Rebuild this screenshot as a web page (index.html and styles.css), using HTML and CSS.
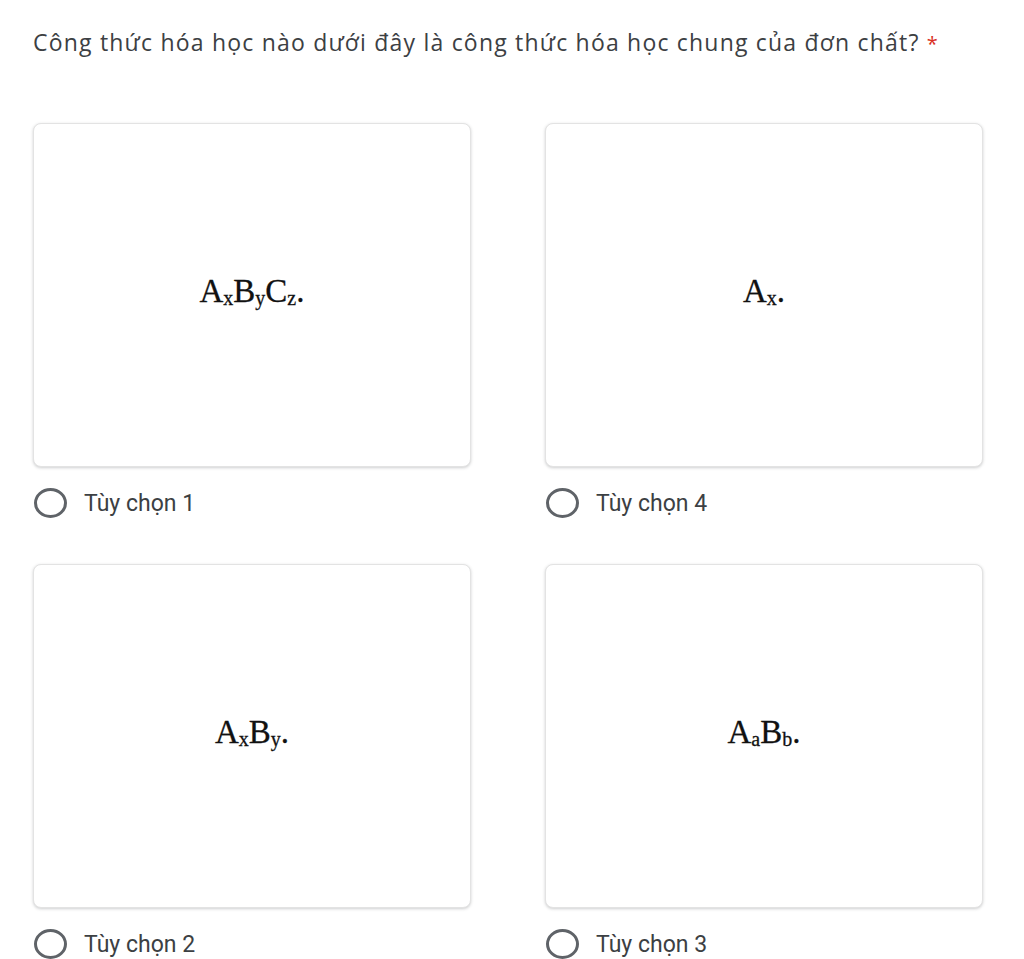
FILE: index.html
```html
<!DOCTYPE html>
<html lang="vi">
<head>
<meta charset="utf-8">
<link rel="stylesheet" href="styles.css">
</head>
<body>
<div class="page">
  <h1 class="title">Công thức hóa học nào dưới đây là công thức hóa học chung của đơn chất? <span class="req">*</span></h1>
  <div class="grid">
    <div class="option">
      <div class="card"><span class="formula">A<sub>x</sub>B<sub>y</sub>C<sub>z</sub>.</span></div>
      <div class="choice"><span class="radio"></span><span class="label">Tùy chọn 1</span></div>
    </div>
    <div class="option">
      <div class="card"><span class="formula">A<sub>x</sub>.</span></div>
      <div class="choice"><span class="radio"></span><span class="label">Tùy chọn 4</span></div>
    </div>
    <div class="option">
      <div class="card"><span class="formula">A<sub>x</sub>B<sub>y</sub>.</span></div>
      <div class="choice"><span class="radio"></span><span class="label">Tùy chọn 2</span></div>
    </div>
    <div class="option">
      <div class="card"><span class="formula">A<sub>a</sub>B<sub>b</sub>.</span></div>
      <div class="choice"><span class="radio"></span><span class="label">Tùy chọn 3</span></div>
    </div>
  </div>
</div>
</body>
</html>
```
FILE: styles.css
```css
html, body {
  margin: 0;
  padding: 0;
  background: #ffffff;
}
.page {
  padding: 26px 0 0 33px;
}
.title {
  margin: 0 0 63px 0;
  font-family: "Open Sans", "Noto Sans", sans-serif;
  font-weight: 400;
  font-size: 23px;
  line-height: 32px;
  letter-spacing: 1.2px;
  color: #3c4043;
  white-space: nowrap;
}
.req {
  color: #d93025;
  font-size: 20px;
  letter-spacing: 0;
}
.grid {
  display: grid;
  grid-template-columns: 438px 438px;
  column-gap: 74px;
  row-gap: 46px;
}
.card {
  height: 344px;
  box-sizing: border-box;
  border: 1px solid #e3e3e3;
  border-radius: 8px;
  background: #fff;
  box-shadow: 0 1px 3px rgba(60, 64, 67, 0.25);
  display: flex;
  align-items: center;
  justify-content: center;
  padding-bottom: 8px;
}
.formula {
  font-family: "Liberation Serif", "Times New Roman", serif;
  font-size: 33px;
  color: #111;
  line-height: 1;
  -webkit-text-stroke: 0.3px #111;
}
.formula sub {
  font-size: 20px;
  vertical-align: -3px;
  line-height: 0;
}
.choice {
  margin-top: 21px;
  height: 30px;
  display: flex;
  align-items: center;
}
.radio {
  width: 27px;
  height: 24px;
  border: 3px solid #5f6368;
  border-radius: 50%;
  margin-left: 1px;
  flex: none;
}
.label {
  margin-left: 17px;
  font-family: Roboto, "Liberation Sans", sans-serif;
  font-size: 23px;
  color: #3c4043;
}
```
